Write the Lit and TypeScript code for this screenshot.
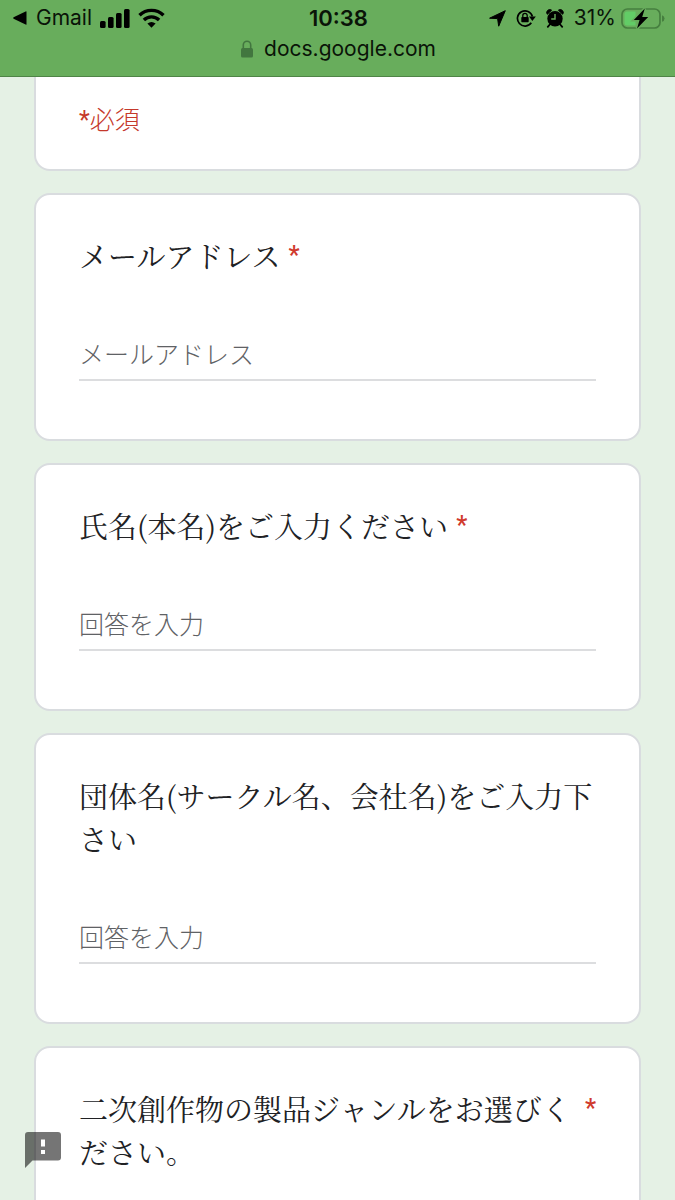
import { LitElement, html, css, nothing } from "lit";
import { customElement, property } from "lit/decorators.js";

@customElement("status-header")
class StatusHeader extends LitElement {
  static styles = css`
    :host {
      display: block;
      box-sizing: border-box;
      padding: 5px 10px 14px 12px;
      background: #68ad5c;
      border-bottom: 1px solid #4f8447;
      color: #0a1408;
      font-family: Inter, "Liberation Sans", sans-serif;
      font-size: 21px;
      line-height: 26px;
    }
    .status {
      display: grid;
      grid-template-columns: 1fr auto 1fr;
      align-items: center;
    }
    .side {
      display: flex;
      align-items: center;
      gap: 8px;
    }
    .side.end {
      justify-content: flex-end;
      gap: 10px;
    }
    .back {
      display: flex;
      align-items: center;
      gap: 8px;
      color: inherit;
      text-decoration: none;
    }
    .clock {
      font-size: 22px;
      font-weight: 600;
    }
    .battery {
      display: flex;
      align-items: center;
      gap: 5px;
    }
    .address {
      display: flex;
      justify-content: center;
      align-items: center;
      gap: 11px;
      padding-top: 5px;
    }
    svg {
      display: block;
      flex: none;
    }
  `;

  render() {
    return html`
      <div class="status">
        <div class="side">
          <a class="back" href="#">
            <svg width="16" height="14" viewBox="0 0 16 14">
              <path d="M14.500 .8V13.200Q14.500 14 13.600 13.600L1.600 7.800Q.5 7 1.600 6.200L13.600 .4Q14.500 0 14.500 .8Z" fill="#000" />
            </svg>
            <span>Gmail</span>
          </a>
          <svg width="30" height="19" viewBox="0 0 30 19" fill="#000">
            <rect x="0" y="12" width="5.600" height="7" rx="1.500" />
            <rect x="8" y="8" width="5.600" height="11" rx="1.500" />
            <rect x="16" y="4" width="5.600" height="15" rx="1.500" />
            <rect x="24" y="0" width="5.600" height="19" rx="1.500" />
          </svg>
          <svg width="27" height="20" viewBox="0 0 27 20" fill="none" stroke="#000" stroke-width="3.400">
            <path d="M1.500 7.300a17.200 17.200 0 0 1 24 0" />
            <path d="M5.900 11.900a11 11 0 0 1 15.200 0" />
            <path d="M9.400 15.600Q13.500 12.200 17.600 15.600L13.500 19.700Z" fill="#000" stroke="none" />
          </svg>
        </div>
        <span class="clock">10:38</span>
        <div class="side end">
          <svg width="17" height="17" viewBox="0 0 17 17">
            <path d="M16.300 .7 9.700 16.200 8.600 8.600 .6 8.200Z" fill="#000" stroke="#000" stroke-linejoin="round" />
          </svg>
          <svg width="20" height="18" viewBox="0 0 20 18">
            <path d="M15.300 13.800A7.600 7.600 0 1 1 16.400 7.500" fill="none" stroke="#000" stroke-width="1.700" />
            <path d="M13 7.500H19.800L16.400 12Z" fill="#000" />
            <rect x="5.300" y="8" width="7.400" height="5.300" rx=".8" fill="#000" />
            <path d="M6.800 8.200V6.500a2.200 2.200 0 0 1 4.400 0V8.200" fill="none" stroke="#000" stroke-width="1.300" />
          </svg>
          <svg width="18" height="19" viewBox="0 0 18 19">
            <path d="M1.300 5.300A3 3 0 0 1 5.600 1.200ZM16.700 5.300A3 3 0 0 0 12.400 1.200Z" fill="#000" stroke="#000" />
            <path d="M3.800 15.500 1.800 17.800M14.200 15.500 16.200 17.800" stroke="#000" stroke-width="1.800" stroke-linecap="round" />
            <circle cx="9" cy="9.800" r="7.700" fill="#000" />
            <path d="M9 5V10H5.200" fill="none" stroke="#68ad5c" stroke-width="1.400" />
          </svg>
          <span class="battery">
            <span>31%</span>
            <svg width="44" height="21" viewBox="0 0 44 21">
              <rect x="1" y="1" width="38" height="19" rx="5.500" fill="none" stroke="#467f3f" stroke-width="1.700" />
              <path d="M6 3.500H14.500V17.500H6Q3.500 17.500 3.500 15V6Q3.500 3.500 6 3.500Z" fill="#62cc66" />
              <path d="M41 7.200Q43.500 8 43.500 10.500T41 13.800Z" fill="#467f3f" />
              <path d="M23.800 .5 12.800 12H18.600L16 20.500 27.200 8.900H21.200Z" fill="#000" stroke="#68ad5c" stroke-width="3" paint-order="stroke" />
            </svg>
          </span>
        </div>
      </div>
      <div class="address">
        <svg width="12" height="18" viewBox="0 0 12 18">
          <rect x="0" y="8" width="12" height="9.500" rx="1.500" fill="#42763f" />
          <path d="M2.300 8.500V5a3.700 3.700 0 0 1 7.400 0V8.500" fill="none" stroke="#42763f" stroke-width="1.600" />
        </svg>
        <span>docs.google.com</span>
      </div>
    `;
  }
}

@customElement("question-card")
class QuestionCard extends LitElement {
  @property() heading = "";
  @property() hint = "";
  @property() type = "text";
  @property({ type: Boolean }) required = false;

  static styles = css`
    :host {
      display: block;
      box-sizing: border-box;
      padding: 39px 43px 58px;
      background: #fff;
      border: 2px solid #d9dcdf;
      border-radius: 16px;
    }
    .title {
      display: flex;
      gap: 8px;
      margin-bottom: 53px;
      font-family: "Noto Serif CJK JP", "Noto Sans CJK JP", serif;
      font-weight: 400;
      font-size: 29px;
      line-height: 43px;
      color: #202124;
    }
    .mark {
      font-family: Roboto, sans-serif;
      font-weight: 500;
      font-size: 25px;
      color: #d03a2d;
    }
    .answer {
      display: block;
      box-sizing: border-box;
      width: 100%;
      height: 51px;
      padding: 0 0 4px;
      border: 0;
      border-bottom: 2px solid #dcdddf;
      border-radius: 0;
      outline: none;
      background: transparent;
      font-family: "Noto Sans CJK JP", sans-serif;
      font-weight: 300;
      font-size: 25px;
      color: #202124;
    }
    .answer::placeholder {
      color: #5f6265;
      opacity: 1;
    }
  `;

  render() {
    return html`
      <label class="title" for="answer">
        <span>${this.heading}</span>
        ${this.required ? html`<span class="mark">*</span>` : nothing}
      </label>
      <input class="answer" id="answer" type=${this.type} placeholder=${this.hint} ?required=${this.required} />
    `;
  }
}

@customElement("app-root")
class AppRoot extends LitElement {
  static styles = css`
    :host {
      display: flex;
      flex-direction: column;
      height: 100vh;
      overflow: hidden;
      background: #e5f1e5;
    }
    .form {
      flex: 1;
      min-height: 0;
      overflow-y: auto;
      scrollbar-width: none;
      display: flex;
      flex-direction: column;
      gap: 22px;
      padding: 0 34px;
    }
    .form > * {
      flex: none;
    }
    .intro {
      padding: 26px 43px 30px;
      background: #fff;
      border: 2px solid #d9dcdf;
      border-top: 0;
      border-radius: 0 0 16px 16px;
    }
    .note {
      margin: 0;
      font-family: Roboto, "Noto Sans CJK JP", sans-serif;
      font-weight: 300;
      font-size: 25px;
      line-height: 36px;
      color: #c5392b;
    }
    .star {
      font-weight: 400;
    }
    .report {
      position: fixed;
      left: 25px;
      bottom: 32px;
      padding: 0;
      border: 0;
      background: none;
      cursor: pointer;
    }
    .report svg {
      display: block;
    }
  `;

  render() {
    return html`
      <status-header></status-header>
      <main class="form">
        <section class="intro"><p class="note"><span class="star">*</span>必須</p></section>
        <question-card heading="メールアドレス" hint="メールアドレス" type="email" required></question-card>
        <question-card heading="氏名(本名)をご入力ください" hint="回答を入力" required></question-card>
        <question-card heading="団体名(サークル名、会社名)をご入力下さい" hint="回答を入力"></question-card>
        <question-card heading="二次創作物の製品ジャンルをお選びください。" hint="回答を入力" required></question-card>
      </main>
      <button class="report" type="button" aria-label="問題を報告">
        <svg width="36" height="36" viewBox="0 0 36 36">
          <path d="M3 0H33Q36 0 36 3V25.500Q36 28.500 33 28.500H7.500L0 36V3Q0 0 3 0Z" fill="#000" fill-opacity=".54" />
          <path d="M16 7.500h4v7h-4zM16 18h4v4h-4z" fill="#fff" />
        </svg>
      </button>
    `;
  }
}
